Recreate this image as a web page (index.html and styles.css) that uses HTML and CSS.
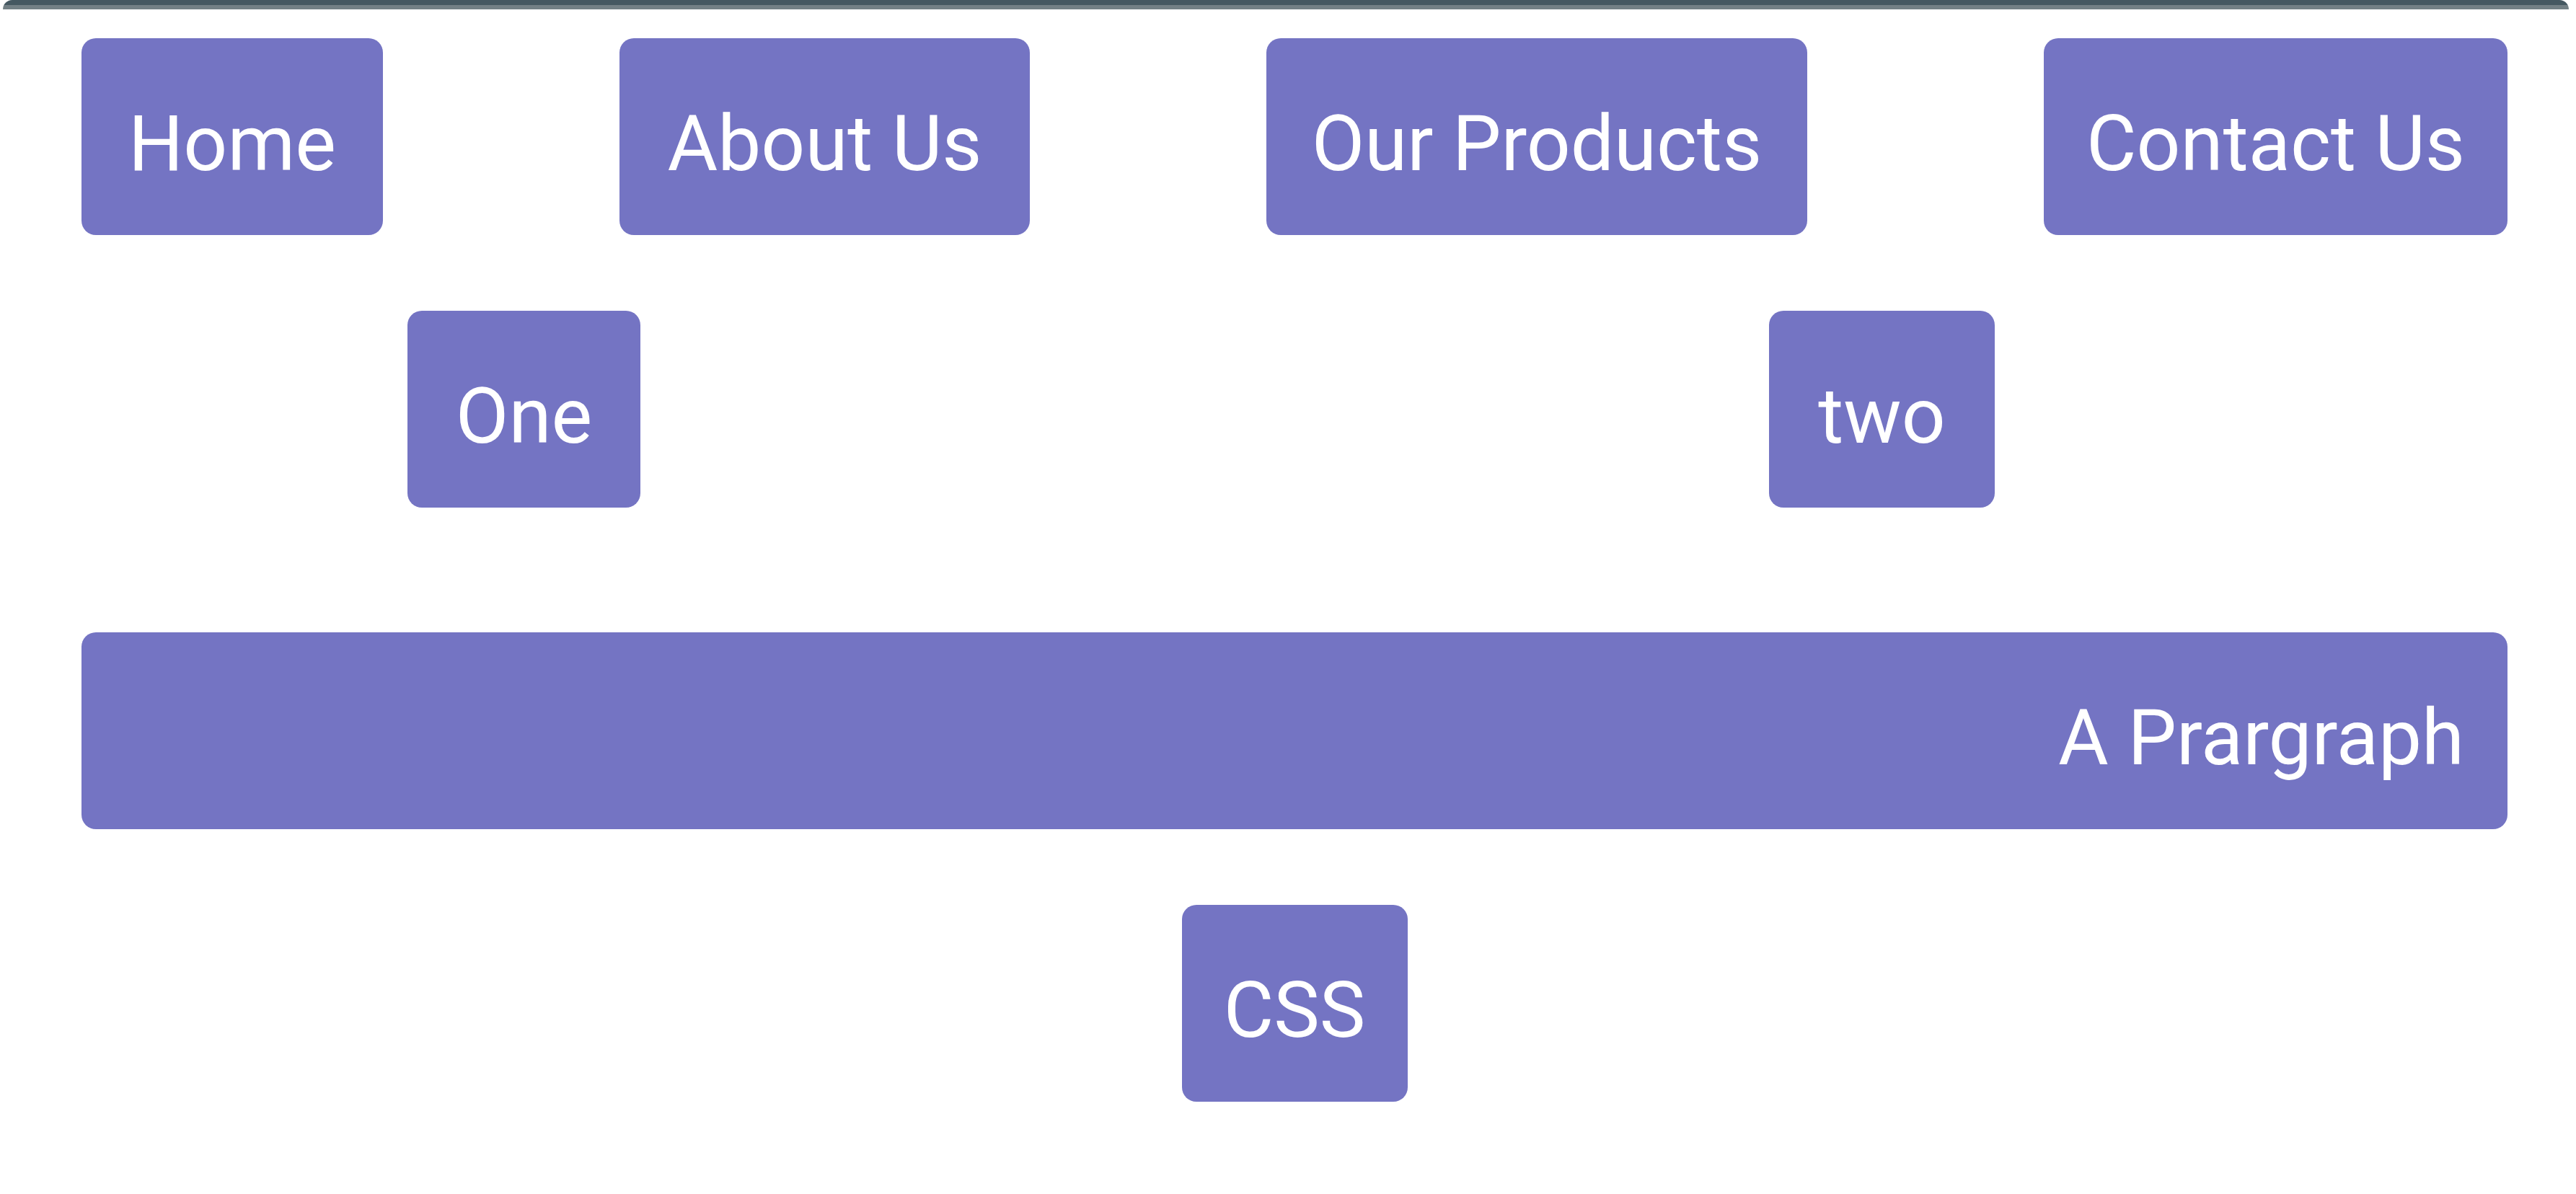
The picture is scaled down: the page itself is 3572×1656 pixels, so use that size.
FILE: index.html
```html
<!DOCTYPE html>
<html lang="en">
<head>
<meta charset="utf-8">
<title>Flex demo</title>
<link rel="stylesheet" href="styles.css">
</head>
<body>
<div class="topbar"></div>
<main class="page">
  <nav class="row row-nav">
    <div class="box w-home">Home</div>
    <div class="box w-about">About Us</div>
    <div class="box w-products">Our Products</div>
    <div class="box w-contact">Contact Us</div>
  </nav>
  <div class="row row-pair">
    <div class="box w-one">One</div>
    <div class="box w-two">two</div>
  </div>
  <div class="row row-para">
    <p class="box box-wide">A Prargraph</p>
  </div>
  <div class="row row-center">
    <div class="box w-css">CSS</div>
  </div>
</main>
</body>
</html>
```

FILE: styles.css
```css
html, body {
  margin: 0;
  padding: 0;
  background: #ffffff;
}

body {
  width: 3572px;
  height: 1656px;
  overflow: hidden;
  font-family: "Roboto", "Open Sans", "Liberation Sans", sans-serif;
}

.topbar {
  height: 13px;
  margin: 0 10px 0 4px;
  border-radius: 30px 30px 0 0;
  background: linear-gradient(#455861 0, #455861 7px, #738085 7px, #738085 13px);
}

.page {
  padding: 40px 95px 0 113px;
}

.row {
  display: flex;
}

.row-nav {
  justify-content: space-between;
}

.row-pair {
  margin-top: 105px;
  padding-left: 452px;
  gap: 1565px;
}

.row-para {
  margin-top: 173px;
}

.row-center {
  margin-top: 105px;
  justify-content: center;
}

.box {
  box-sizing: border-box;
  height: 273px;
  margin: 0;
  display: flex;
  align-items: center;
  justify-content: center;
  padding: 20px 0 0 0;
  background: #7474c3;
  color: #ffffff;
  border-radius: 20px;
  font-size: 107px;
  font-weight: 400;
  line-height: 1;
  white-space: nowrap;
}

.box-wide {
  flex: 1;
  justify-content: flex-end;
  padding-right: 60px;
}

.w-home { width: 418px; }
.w-about { width: 569px; }
.w-products { width: 750px; }
.w-contact { width: 643px; }
.w-one { width: 323px; }
.w-two { width: 313px; }
.w-css { width: 313px; }
```
